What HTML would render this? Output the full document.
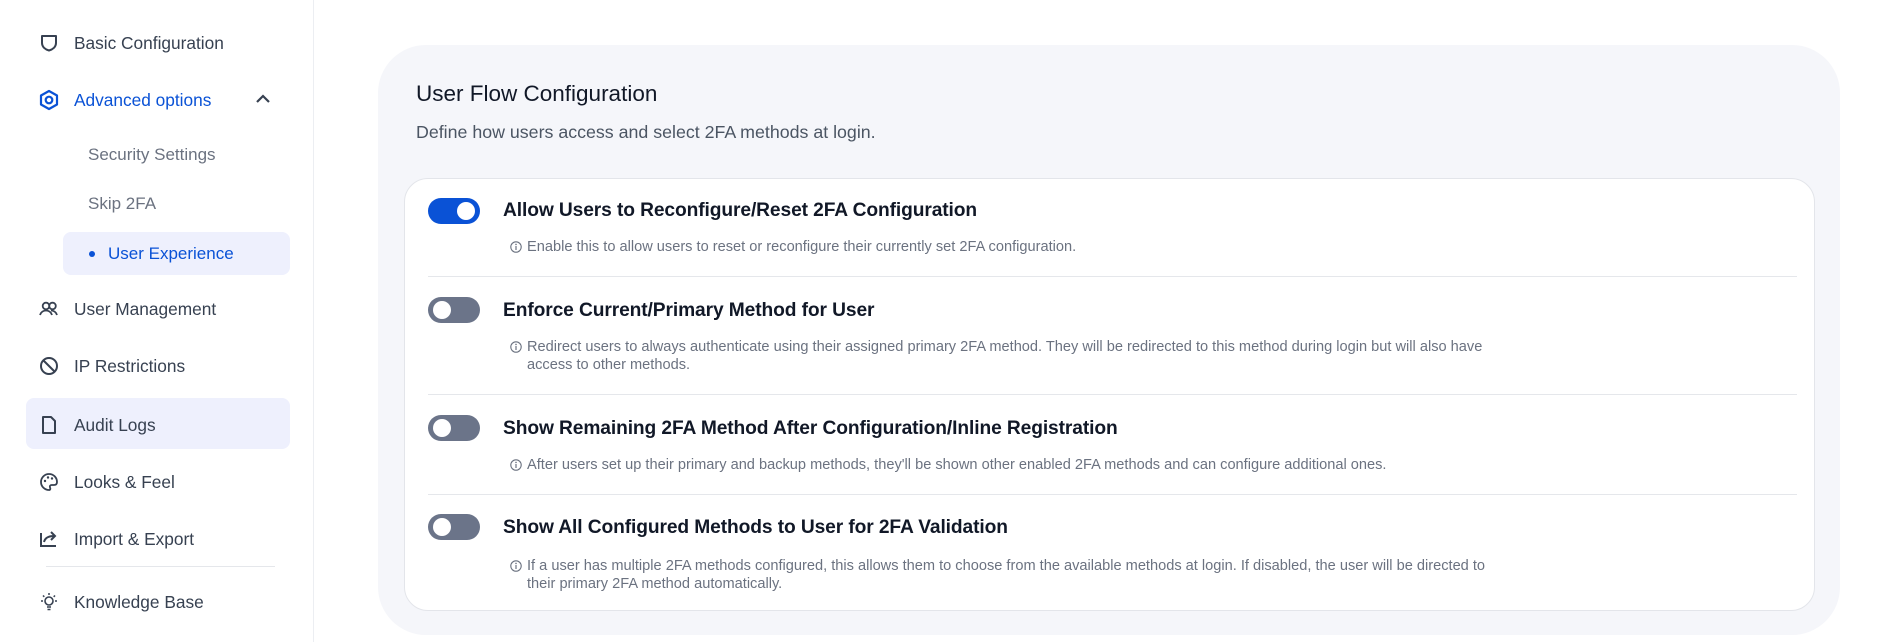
<!DOCTYPE html>
<html><head><meta charset="utf-8"><style>
*{box-sizing:border-box;margin:0;padding:0}
body{width:1898px;height:642px;background:#fff;font-family:"Liberation Sans",sans-serif;position:relative;overflow:hidden;color:#1f2937}
.sb{position:absolute;left:0;top:0;width:314px;height:642px;border-right:1px solid #eceef2}
.it{position:absolute;left:74px;font-size:17.3px;color:#374151;line-height:20px}
.ic{position:absolute;left:38px;width:22px;height:22px}
.sub{position:absolute;left:88px;font-size:17px;color:#6b7280;line-height:20px}
.hl{position:absolute;background:#eef0fd;border-radius:8px}
.outer{position:absolute;left:378px;top:45px;width:1462px;height:590px;background:#f5f6fa;border-radius:48px}
.h1{position:absolute;left:416px;top:81px;font-size:22.5px;color:#111827}
.h2{position:absolute;left:416px;top:122px;font-size:17.8px;color:#4b5563}
.inner{position:absolute;left:404px;top:178px;width:1411px;height:433px;background:#fff;border:1px solid #e3e5ea;border-radius:24px}
.tg{position:absolute;left:428px;width:52px;height:26px;border-radius:13px;background:#6b7489}
.tg::after{content:"";position:absolute;top:4px;left:5px;width:18px;height:18px;border-radius:50%;background:#fff}
.tg.on{background:#0a52d6}
.tg.on::after{left:29px}
.t{position:absolute;left:503px;font-size:19.2px;font-weight:bold;color:#111827;line-height:22px;letter-spacing:-0.1px}
.d{position:absolute;left:527px;font-size:14.6px;color:#6b7280;line-height:18px}
.d svg{position:absolute;left:-17px;top:3px}
.hr{position:absolute;left:428px;width:1369px;height:1px;background:#e5e7eb}
</style></head><body>
<div class="sb">
<svg class="ic" style="top:32px" viewBox="0 0 22 22"><path d="M4 4h14v7c0 4-3.5 6.5-7 7.5C7.5 17.5 4 15 4 11z" fill="none" stroke="#374151" stroke-width="2" stroke-linejoin="round"/></svg>
<div class="it" style="top:33px">Basic Configuration</div>
<svg class="ic" style="top:89px" viewBox="0 0 22 22"><path d="M11 2l8 4.5v9L11 20l-8-4.5v-9z" fill="none" stroke="#0a52d6" stroke-width="2.2" stroke-linejoin="round"/><circle cx="11" cy="11" r="3.3" fill="none" stroke="#0a52d6" stroke-width="2.2"/></svg>
<div class="it" style="top:90px;color:#0a52d6">Advanced options</div>
<svg style="position:absolute;left:254px;top:93px" width="18" height="12" viewBox="0 0 18 12"><path d="M3 9l6-6 6 6" fill="none" stroke="#374151" stroke-width="2.2"/></svg>
<div class="sub" style="top:145px">Security Settings</div>
<div class="sub" style="top:194px">Skip 2FA</div>
<div class="hl" style="left:63px;top:232px;width:227px;height:43px"></div>
<div style="position:absolute;left:89px;top:251px;width:6px;height:6px;border-radius:50%;background:#0a52d6"></div>
<div class="sub" style="left:108px;top:244px;color:#0a52d6">User Experience</div>
<svg class="ic" style="top:298px" viewBox="0 0 22 22"><circle cx="8" cy="8" r="3.3" fill="none" stroke="#374151" stroke-width="1.8"/><circle cx="14.5" cy="8" r="3.3" fill="none" stroke="#374151" stroke-width="1.8"/><path d="M2 17c1-3 3.5-4.5 6-4.5s5 1.5 6 4.5M13 12.5c2.5 0 5 1.5 6 4.5" fill="none" stroke="#374151" stroke-width="1.8"/></svg>
<div class="it" style="top:299px">User Management</div>
<svg class="ic" style="top:355px" viewBox="0 0 22 22"><circle cx="11" cy="11" r="8" fill="none" stroke="#374151" stroke-width="2"/><path d="M5.5 5.5l11 11" stroke="#374151" stroke-width="2"/></svg>
<div class="it" style="top:356px">IP Restrictions</div>
<div class="hl" style="left:26px;top:398px;width:264px;height:51px"></div>
<svg class="ic" style="top:414px" viewBox="0 0 22 22"><path d="M5 3h8l4 4v12H5z" fill="none" stroke="#374151" stroke-width="2" stroke-linejoin="round"/></svg>
<div class="it" style="top:415px">Audit Logs</div>
<svg class="ic" style="top:471px" viewBox="0 0 22 22"><path d="M11 3a8 8 0 1 0 0 16c1.5 0 1.5-1.5 1-2.5s0-2.5 1.5-2.5H16c2 0 3-1 3-3 0-4.5-3.5-8-8-8z" fill="none" stroke="#374151" stroke-width="1.8"/><circle cx="7" cy="10" r="1.2" fill="#374151"/><circle cx="10" cy="6.5" r="1.2" fill="#374151"/><circle cx="14" cy="7.5" r="1.2" fill="#374151"/></svg>
<div class="it" style="top:472px">Looks &amp; Feel</div>
<svg class="ic" style="top:528px" viewBox="0 0 22 22"><path d="M3 5v13h15" fill="none" stroke="#374151" stroke-width="2"/><path d="M6 14c1-4 4-6 10-6M13 4l4 4-4 4" fill="none" stroke="#374151" stroke-width="2"/></svg>
<div class="it" style="top:529px">Import &amp; Export</div>
<div style="position:absolute;left:46px;top:566px;width:229px;height:1px;background:#e5e7eb"></div>
<svg class="ic" style="top:591px" viewBox="0 0 22 22"><circle cx="11" cy="10" r="4" fill="none" stroke="#374151" stroke-width="1.6"/><path d="M9 16h4M9.5 18.5h3M11 2v2M3 10h2M17 10h2M5 4.5l1.3 1.3M17 4.5l-1.3 1.3" stroke="#374151" stroke-width="1.5"/></svg>
<div class="it" style="top:592px">Knowledge Base</div>
</div>
<div class="outer"></div>
<div class="h1">User Flow Configuration</div>
<div class="h2">Define how users access and select 2FA methods at login.</div>
<div class="inner"></div>
<svg width="0" height="0" style="position:absolute"><defs><g id="i"><circle cx="6" cy="6" r="5.2" fill="none" stroke="#6b7280" stroke-width="1.1"/><path d="M6 5v4" stroke="#6b7280" stroke-width="1.2"/><circle cx="6" cy="3.4" r=".8" fill="#6b7280"/></g></defs></svg>
<div class="tg on" style="top:198px"></div>
<div class="t" style="top:200px">Allow Users to Reconfigure/Reset 2FA Configuration</div>
<div class="d" style="top:238px"><svg width="12" height="12"><use href="#i"/></svg>Enable this to allow users to reset or reconfigure their currently set 2FA configuration.</div>
<div class="hr" style="top:276px"></div>
<div class="tg" style="top:297px"></div>
<div class="t" style="top:300px">Enforce Current/Primary Method for User</div>
<div class="d" style="top:338px"><svg width="12" height="12"><use href="#i"/></svg>Redirect users to always authenticate using their assigned primary 2FA method. They will be redirected to this method during login but will also have<br>access to other methods.</div>
<div class="hr" style="top:394px"></div>
<div class="tg" style="top:415px"></div>
<div class="t" style="top:418px">Show Remaining 2FA Method After Configuration/Inline Registration</div>
<div class="d" style="top:456px"><svg width="12" height="12"><use href="#i"/></svg>After users set up their primary and backup methods, they'll be shown other enabled 2FA methods and can configure additional ones.</div>
<div class="hr" style="top:494px"></div>
<div class="tg" style="top:514px"></div>
<div class="t" style="top:517px">Show All Configured Methods to User for 2FA Validation</div>
<div class="d" style="top:557px"><svg width="12" height="12"><use href="#i"/></svg>If a user has multiple 2FA methods configured, this allows them to choose from the available methods at login. If disabled, the user will be directed to<br>their primary 2FA method automatically.</div>
</body></html>
